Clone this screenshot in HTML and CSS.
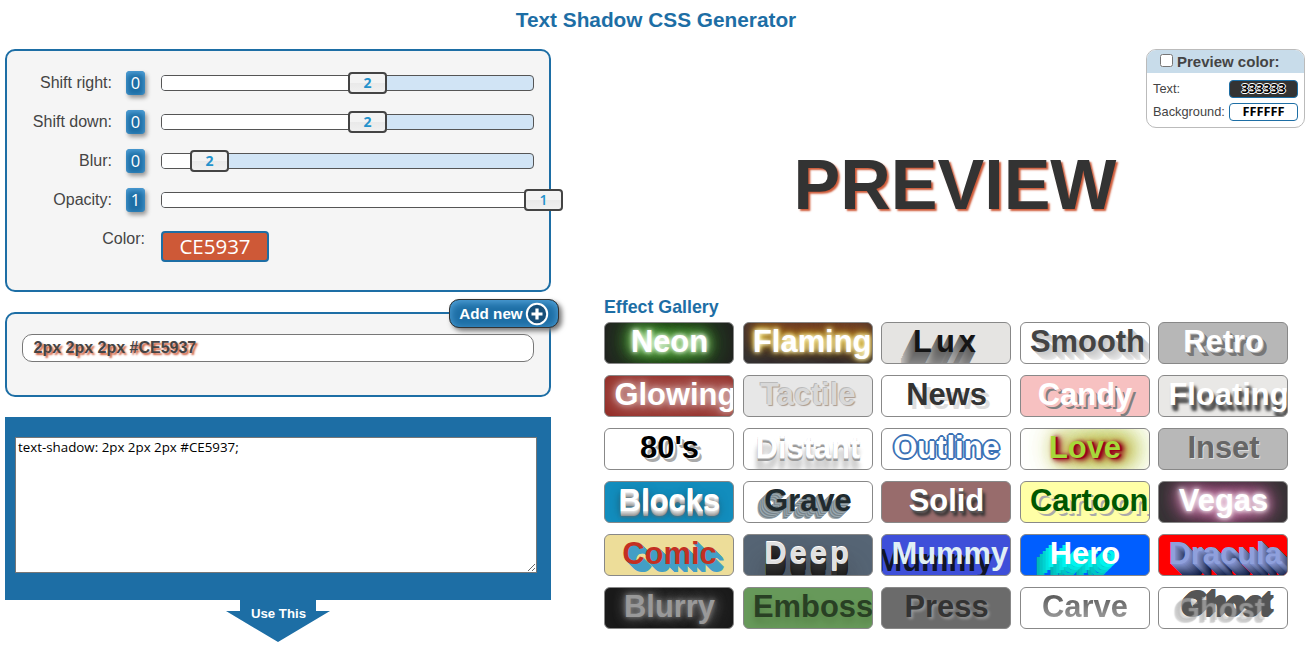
FILE: index.html
```html
<!DOCTYPE html>
<html lang="en">
<head>
<meta charset="utf-8">
<title>Text Shadow CSS Generator</title>
<link rel="stylesheet" href="styles.css">
</head>
<body>
<h1 class="title">Text Shadow CSS Generator</h1>
<main class="layout">
  <section class="left">
    <div class="panel controls">
      <div class="row"><label class="name">Shift right:</label><span class="reset">0</span><div class="track"><div class="fill" style="width:52%"></div><span class="handle" style="left:186px">2</span></div></div>
      <div class="row"><label class="name">Shift down:</label><span class="reset">0</span><div class="track"><div class="fill" style="width:52%"></div><span class="handle" style="left:186px">2</span></div></div>
      <div class="row"><label class="name">Blur:</label><span class="reset">0</span><div class="track"><div class="fill" style="width:10%"></div><span class="handle" style="left:28px">2</span></div></div>
      <div class="row"><label class="name">Opacity:</label><span class="reset">1</span><div class="track"><div class="fill" style="width:100%"></div><span class="handle light" style="left:362px">1</span></div></div>
      <div class="row color-row"><label class="name wide">Color:</label><span class="color">CE5937</span></div>
    </div>
    <div class="panel shadows">
      <button class="add">Add new<svg width="24" height="24" viewBox="0 0 24 24"><circle cx="12" cy="12" r="10.2" fill="#174f79" stroke="#fff" stroke-width="2"/><path d="M12 6.500v11M6.500 12h11" stroke="#fff" stroke-width="3.200"/></svg></button>
      <div class="entry">2px 2px 2px #CE5937</div>
    </div>
    <div class="output">
      <textarea class="code" spellcheck="false">text-shadow: 2px 2px 2px #CE5937;</textarea>
    </div>
    <div class="use"><span>Use This</span></div>
  </section>
  <section class="right">
    <div class="preview">PREVIEW</div>
    <div class="colors">
      <div class="colors-head"><input type="checkbox" class="check">Preview color:</div>
      <div class="colors-row">Text:<span class="swatch dark">333333</span></div>
      <div class="colors-row">Background:<span class="swatch">FFFFFF</span></div>
    </div>
    <h2 class="subtitle">Effect Gallery</h2>
    <div class="gallery">
      <div class="fx neon">Neon</div><div class="fx flaming">Flaming</div><div class="fx lux">Lux</div><div class="fx smooth">Smooth</div><div class="fx retro">Retro</div>
      <div class="fx glowing">Glowing</div><div class="fx tactile">Tactile</div><div class="fx news">News</div><div class="fx candy">Candy</div><div class="fx floating">Floating</div>
      <div class="fx eighties">80's</div><div class="fx distant">Distant</div><div class="fx outline">Outline</div><div class="fx love">Love</div><div class="fx inset">Inset</div>
      <div class="fx blocks">Blocks</div><div class="fx grave">Grave</div><div class="fx solid">Solid</div><div class="fx cartoon">Cartoon</div><div class="fx vegas">Vegas</div>
      <div class="fx comic">Comic</div><div class="fx deep">Deep</div><div class="fx mummy">Mummy</div><div class="fx hero">Hero</div><div class="fx dracula">Dracula</div>
      <div class="fx blurry">Blurry</div><div class="fx emboss">Emboss</div><div class="fx press">Press</div><div class="fx carve">Carve</div><div class="fx ghost">Ghost</div>
    </div>
  </section>
</main>
</body>
</html>
```
FILE: styles.css
```css
* { box-sizing: border-box; }
body { margin: 0; height: 647px; overflow: hidden; background: #fff; color: #444; font: 16px "Liberation Sans", Arial, sans-serif; }
.title { margin: 0; padding: 8px 0 0 6px; height: 49px; font-size: 20.8px; line-height: 24px; text-align: center; color: #1d6ea5; }
.layout { display: flex; align-items: flex-start; gap: 53px; padding-left: 5px; }
.left { width: 546px; }
.panel { position: relative; border: 2px solid #1d6ea5; border-radius: 10px; background: #f5f5f5; }

.controls { height: 243px; padding: 12px 15px 0 0; }
.row { display: flex; align-items: center; height: 39px; }
.name { width: 105px; text-align: right; }
.reset { width: 19px; height: 24px; margin: 0 16px 0 14px; border-radius: 4px; background: #1d6ea5; box-shadow: inset 0 2px 6px #58a8df, 2px 3px 4px #999; color: #fff; font: 500 16.500px/23px "Open Sans", sans-serif; text-align: center; }
.track { position: relative; flex: none; width: 373px; height: 16px; border: 1px solid #555; border-radius: 4px; background: #d1e4f5; }
.fill { height: 100%; border-radius: 3px; background: #fff; }
.handle { position: absolute; top: -4px; width: 39px; height: 22px; border: 2px solid #444; border-radius: 4px; background: linear-gradient(#f3f3f3 50%, #e9e9e9 50%, #f0f0f0); color: #2492cc; font: bold 14px/18px "Open Sans", sans-serif; text-align: center; }
.light { font-weight: 600; }
.color-row { align-items: flex-start; padding-top: 10px; }
.wide { width: 138px; padding-top: 1px; }
.color { width: 108px; height: 31px; margin: 2px 0 0 16px; border: 2px solid #1d6ea5; border-radius: 4px; background: #ce5937; color: #fff; font: 20.500px/27px "Open Sans", sans-serif; text-align: center; }

.shadows { height: 85px; margin-top: 20px; padding: 20px 15px; }
.entry { height: 28px; padding-left: 10.500px; border: 1px solid #777; border-radius: 10px; background: #fff; font-weight: bold; line-height: 25px; text-shadow: 2px 2px 2px #ce5937; }
.add { position: absolute; top: -15px; right: -10px; display: flex; align-items: center; justify-content: center; gap: 2px; width: 110px; height: 29px; padding: 0; border: 1px solid #333; border-radius: 10px; background: #1d6ea5; box-shadow: inset 0 2px 8px #58a8df, 3px 3px 5px #777; color: #fff; font: bold 15.2px/25px "Liberation Sans", Arial, sans-serif; }

.output { height: 183px; margin-top: 20px; padding: 20px 10px; background: #1d6ea5; }
.code { display: block; width: 522px; height: 136px; margin: 0; padding: 1px 2px; border: 1px solid #777; background: #fff; color: #000; font: 13.333px/17px "Open Sans", sans-serif; outline: none; }
.use { width: 104px; height: 42px; margin-left: 221px; padding: 5px 0 0 1px; background: #1d6ea5; clip-path: polygon(14px 0, 90px 0, 90px 11px, 104px 11px, 52px 42px, 0 11px, 14px 11px); color: #fff; font: bold 13.2px/17px "Liberation Sans", Arial, sans-serif; text-align: center; }

.right { position: relative; width: 702px; }
.preview { height: 248px; padding-top: 97px; color: #333; font-size: 70px; font-weight: bold; line-height: 78px; text-align: center; text-shadow: 2px 2px 2px #ce5937; }
.colors { position: absolute; top: 0; right: 1px; width: 159px; height: 79px; overflow: hidden; border: 1px solid #bbb; border-radius: 10px; background: #fff; font-size: 12.8px; }
.colors-head { display: flex; align-items: center; height: 23px; margin-bottom: 4px; padding: 0 0 1px 13px; background: #c8dcea; font-size: 15px; font-weight: bold; }
.check { margin: 0 4px 2px 0; width: 13px; height: 13px; }
.colors-row { display: flex; align-items: center; justify-content: space-between; height: 23px; padding: 0 6px; }
.swatch { width: 69px; height: 18px; border: 1px solid #1d6ea5; border-radius: 4px; color: #000; font: bold 12.800px/15px "Open Sans", sans-serif; text-align: center; }
.dark { background: #333; text-shadow: 1px 0 #fff, -1px 0 #fff, 0 1px #fff, 0 -1px #fff; }

.subtitle { margin: 0; height: 25px; color: #1d6ea5; font-size: 17.8px; line-height: 20px; }
.gallery { display: grid; grid-template-columns: repeat(5, 130px); gap: 11px 8.5px; }
.fx { height: 42px; padding: 0 8.500px 0 9.500px; overflow: hidden; border: 1px solid #888; border-radius: 6px; font-size: 30.900px; font-weight: bold; line-height: 38px; text-align: center; white-space: nowrap; background: #fff; color: #fff; }

.neon { background: #222; text-shadow: 0 0 4px #fff, 0 0 10px #d8ffc8, 0 0 16px #69d448, 0 0 20px #48b030, 0 0 30px #48a030, 0 0 30px #38a020, 0 0 40px #38a020; }
.flaming { background: #333; text-shadow: 0 0 4px #fff, 0 0 6px #ffe84a, 0 -2px 8px #d4b420, 0 -6px 18px #b86820, 0 -12px 25px #a84820, 0 -14px 30px #a84820; }
.lux { background: #e5e4e2; color: #151515; letter-spacing: 4px; text-shadow: -0.5px 1px #666, -1px 2px #686868, -1.5px 3px #6b6b6b, -2px 4px #6d6d6d, -2.5px 5px #707070, -3px 6px #737373, -3.5px 7px #767676, -4px 8px #797979, -4.500px 9px #7c7c7c, -5px 10px #808080, -5.500px 11px #838383, -6px 12px #868686, -6.500px 13px #8a8a8a, -7px 14px #8e8e8e, -7.500px 15px #919191, -8px 16px #949494, -8.500px 17px #989898, -9px 18px #9b9b9b, -9.500px 19px #9f9f9f, -10px 20px #a2a2a2, -10.500px 21px #a5a5a5, -11px 22px #a9a9a9, -11.500px 23px #adadad, -12px 24px #b0b0b0, -13px 26px #b4b4b4, -14px 28px #b8b8b8; }
.smooth { color: #444; text-shadow: 1px 1px #ccc, 2px 2px #ccc, 3px 3px #d0d0d0, 4px 4px #d5d5d5, 5px 5px #d9d9d9, 6px 6px #ddd, 7px 7px #e2e2e2, 8px 8px #e9e9e9; }
.retro { background: #b7b7b7; text-shadow: 1px 1px #b7b7b7, 2px 2px #777, 3px 3px #777, 4px 4px #777; }
.glowing { background: #922b25; text-shadow: 0 0 6px rgba(255,255,255,.6), 0 0 20px #fff; }
.tactile { background: #e7e7e7; color: #d8d8d8; text-shadow: -1px -1px #bbb, 1px 1px 1px #a99a8e; }
.news { color: #333; text-shadow: 4px 4px #ddd; }
.candy { background: #f7c1c1; text-shadow: 2px 2px #f7c1c1, 4px 4px #808080; }
.floating { background: #e9e8e6; text-shadow: 2px 4px 3px #555, 3px 6px 3px #444; }
.eighties { color: #000; text-shadow: 2px 1px #fff, 4px 4px #aaa, 3px 3px #aaa; }
.distant { text-shadow: 0 1px #ccc, 0 3px #999, 0 9px 4px #ccc, -1px 13px 5px #ccc; }
.outline { text-shadow: -2px 0 #3c72b5, 2px 0 #3c72b5, 0 -2px #3c72b5, 0 2px #3c72b5, 1px 1px #3c72b5, -1px -1px #3c72b5, 1px -1px #3c72b5, -1px 1px #3c72b5; }
.love { color: #a6d83a; text-shadow: 2px 1px 1px #9b001b, 3px 1px 4px #90001b, 4px 2px 6px #90001b, 8px 1px 15px #b96b00, 12px 0 26px #9bb600, 12px 0 30px #9bb600, 12px 0 36px #9bb600, 12px 0 36px #9bb600; }
.inset { background: #b8b8b8; color: #666; text-shadow: 1px 1px #ddd; }
.blocks { background: #128dbd; text-shadow: 0 1px #ddd, 0 2px #ccc, 0 3px #bbb, 0 4px #aaa, 0 5px #999, 0 6px 3px #55717e, 0 4px 10px #17536b; }
.grave { color: #202a2e; text-shadow: -1px 1px #7f898d, -2px 2px #9ca9b0, -3px 3px #758289, -4px 4px #9ca9b0, -5px 5px #758289, -6px 6px #9ca9b0, -7px 7px #758289, -8px 8px #9ca9b0; }
.solid { background: #986c6c; text-shadow: 1px 2px 1px #555, 3px 5px 3px #333; }
.cartoon { background: #ffffa6; color: #005700; text-shadow: 3px 3px #ffffa6, 5px 5px #aaa; }
.vegas { background: #333; text-shadow: 0 0 4px #fff, 0 0 10px #fff, 0 0 16px #e583bc, 0 0 20px #e563ac, 0 0 26px #c7589e, 0 0 34px #b8488b; }
.comic { background: #eddd99; color: #c33022; text-shadow: 1px 1px #439ec6, 2px 2px #439ec6, 3px 3px #439ec6, 4px 4px #439ec6, 5px 5px #439ec6, 6px 6px #439ec6, 7px 7px #439ec6, 8px 8px #439ec6; }
.deep { background: #566575; color: #e0e0e0; letter-spacing: 3px; text-shadow: 0 -1px #fff, 0 1px #2e2e2e, 0 2px #2e2e2e, 0 3px #2c2c2c, 0 4px #2b2b2b, 0 5px #2a2a2a, 0 6px #282828, 0 7px #272727, 0 8px #252525, 0 9px #242424, 0 10px #222, 0 11px #202020, 0 12px #1f1f1f, 0 13px #1d1d1d, 0 14px #1c1c1c, 0 22px 30px #333; }
.mummy { background: #3e4fd9; color: #e0eff5; text-shadow: -15px 7px #101528; }
.hero { background: #005eff; text-shadow: -3px 3px #00f4ef, -6px 6px #00e4df, -9px 9px #00d3d0, -12px 12px #00c5c4, -15px 15px #00b8b8; }
.dracula { background: #f00; color: #8fa0dc; text-shadow: 1px 1px #7d8dca, 2px 2px #7584bd, 3px 3px #6d7cb1, 4px 4px #6473a5, 5px 5px #5c6a9c, 6px 6px #52608f, 7px 7px #495785, 8px 8px #404f7c, 9px 9px #364572, 10px 10px #2d3c69, 11px 11px #253460, 12px 12px #1d2c57, 13px 13px #15244e, 14px 14px #0e1d47; }
.blurry { background: #1a1a1a; color: #999; text-shadow: 0 0 5px #888, 0 0 12px #777, 4px -2px 18px #555; }
.emboss { background: #67995a; color: #294024; text-shadow: 0 6px 6px #588448; }
.press { background: #6b6b6b; color: #333; text-shadow: 2px 2px 3px #999; }
.carve { background: linear-gradient(#555 5px, #aaa 36px) text, linear-gradient(#fff, #fff); color: transparent; }
.ghost { color: transparent; line-height: 34px; text-shadow: -3px 5px 1px rgba(190,190,190,.6), 6px -3px #555, 5px -2px #555, 4px -1px #555, 3px 0 #555, 2px 1px #555, 1px 2px #555, -5px 7px 1px #ccc, -6px 8px 1px #ddd; }
```
